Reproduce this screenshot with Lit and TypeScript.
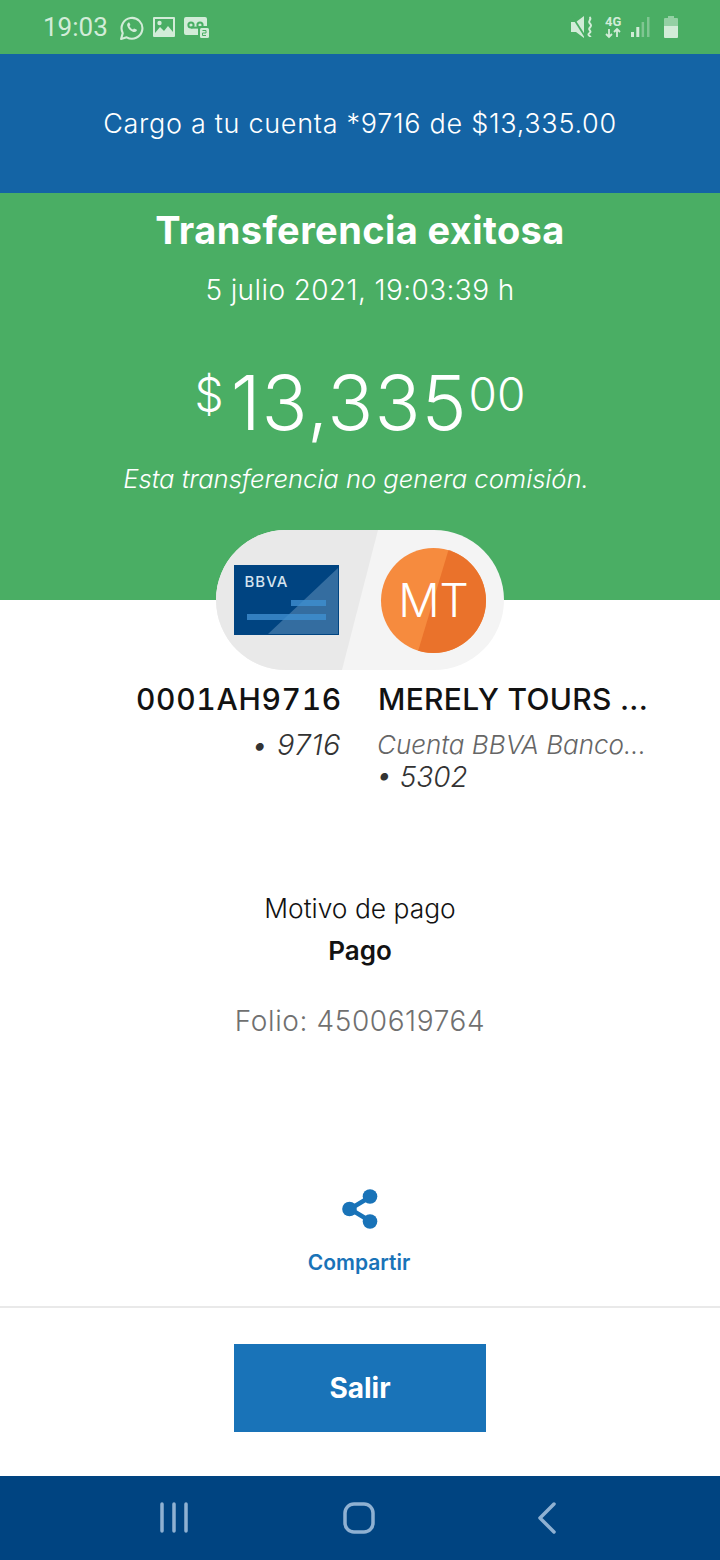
import { LitElement, html, css, svg } from "lit";
import { customElement } from "lit/decorators.js";

const whatsapp = svg`<path d="M2 23l1.6-5.6A10 10 0 1 1 7.4 21.4Z" fill="none" stroke="currentColor" stroke-width="2" stroke-linejoin="round"/><path d="M8.8 7.4c-.9.7-1.2 1.9-.8 3.1.8 2.6 3.1 4.9 5.8 5.7 1.2.3 2.4 0 3.1-.9.4-.6.3-1-.1-1.3l-1.8-.9c-.4-.2-.7-.1-.9.2l-.6.7c-1.7-.6-2.9-1.9-3.5-3.4l.6-.6c.3-.3.3-.6.2-.9l-.8-1.7c-.3-.4-.8-.3-1.2 0Z" fill="currentColor"/>`;

@customElement("app-root")
export class AppRoot extends LitElement {
  static styles = css`
    :host {
      display: block;
      width: 720px;
      height: 1560px;
      background: #fff;
      font-family: Inter, "Liberation Sans", sans-serif;
      color: #121212;
      overflow: hidden;
    }
    .page { display: flex; flex-direction: column; height: 1560px; }

    .status {
      height: 54px; flex: none; background: #4aae64; color: #d2ecd8;
      display: flex; align-items: center; padding: 0 42px 0 43px;
      font-family: Roboto, sans-serif;
    }
    .time { font-size: 26px; margin-right: 11px; width: 65px; }
    .status svg { display: block; flex: none; }
    .left-icons { display: flex; align-items: center; gap: 9px; }
    .right-icons { margin-left: auto; display: flex; align-items: center; }

    .banner {
      height: 139px; flex: none; background: #1464a5; color: #fff;
      display: flex; align-items: center; justify-content: center;
      font-size: 27px; letter-spacing: 0.7px; font-weight: 300;
    }

    .hero {
      height: 407px; flex: none; background: #4aae64; color: #fff;
      display: flex; flex-direction: column; align-items: center;
      box-sizing: border-box; padding-top: 13px;
    }
    .hero h1 { margin: 0; font-size: 38px; letter-spacing: 0.4px; line-height: 48px; font-weight: 700; }
    .date { margin-top: 18px; font-size: 28px; letter-spacing: 0.4px; line-height: 36px; font-weight: 300; }
    .amount {
      margin-top: 52px; display: flex; align-items: flex-start; font-weight: 300;
      height: 84px; line-height: 84px; font-size: 76px; letter-spacing: 1px;
    }
    .amount .cur { font-size: 46px; line-height: 68px; margin-right: 7px; letter-spacing: 0; }
    .amount .cents { font-size: 46px; line-height: 68px; margin-left: 1px; letter-spacing: 0; }
    .note { margin: 17px 8px 0 0; font-size: 25.6px; line-height: 36px; font-style: italic; font-weight: 300; }

    .pill {
      position: relative; z-index: 1; flex: none;
      width: 288px; height: 140px; margin: -70px auto 0;
      border-radius: 70px; overflow: hidden; background: #f4f4f4;
    }
    .pill svg { display: block; }
    .mt {
      position: absolute; left: 165px; top: 17px; width: 105px; height: 105px;
      display: flex; align-items: center; justify-content: center;
      color: #fff; font-size: 46px; font-weight: 300;
    }

    .accounts {
      flex: none; display: grid; grid-template-columns: 341px 1fr; column-gap: 37px;
      margin-top: 11px;
    }
    .from { text-align: right; }
    .name { font-size: 30px; letter-spacing: 0.3px; line-height: 36px; font-weight: 500; white-space: nowrap; }
    .from .name { font-variant-numeric: tabular-nums; letter-spacing: 0.7px; margin-right: -1px; }
    .sub {
      margin-top: 11px; font-size: 29px; letter-spacing: 0.5px; line-height: 33px; font-style: italic;
      font-weight: 300; color: #333; white-space: nowrap;
    }
    .to .sub { font-size: 26px; letter-spacing: 0; color: #666; margin-left: -1px; }
    .to .num { margin-left: -2px; font-size: 28px; line-height: 33px; font-style: italic; font-weight: 300; color: #333; }

    .details { flex: none; margin-top: 96px; text-align: center; }
    .motive { font-size: 26.4px; line-height: 36px; font-weight: 300; }
    .pago { margin-top: 7px; font-size: 26px; line-height: 36px; font-weight: 600; }
    .folio { margin-top: 34px; font-size: 28px; letter-spacing: 0.6px; line-height: 36px; font-weight: 300; color: #707070; }

    .share {
      flex: none; margin-top: 150px; display: flex; flex-direction: column; align-items: center;
      color: #1973b8;
    }
    .share span { margin-top: 20px; margin-right: 2px; font-size: 21px; line-height: 28px; font-weight: 600; }

    .footer {
      flex: 1; margin-top: 29px; border-top: 2px solid #e9e9e9;
      display: flex; justify-content: center; padding-top: 36px;
    }
    .salir {
      width: 252px; height: 88px; border: 0; background: #1973b8; color: #fff;
      font: 700 28px Inter, sans-serif; padding: 0;
    }

    .nav {
      height: 84px; flex: none; background: #004481; color: #8fb1d2;
      display: flex; align-items: center; justify-content: center;
    }
  `;

  render() {
    return html`<div class="page">
      <div class="status">
        <span class="time">19:03</span>
        <div class="left-icons">
          <svg width="25" height="25" viewBox="0 0 24 24">${whatsapp}</svg>
          <svg width="22" height="20" viewBox="0 0 22 20">
            <path fill="currentColor" fill-rule="evenodd" d="M1 0h20a1 1 0 0 1 1 1v18a1 1 0 0 1-1 1H1a1 1 0 0 1-1-1V1a1 1 0 0 1 1-1Zm1 2v14l5-6 4 4 4-5 5 6V2Z"/>
            <circle cx="6.5" cy="6" r="2.2" fill="currentColor"/>
          </svg>
          <svg width="26" height="21" viewBox="0 0 26 21">
            <path fill="currentColor" d="M2 0h19a2 2 0 0 1 2 2v7h-7a2 2 0 0 0-2 2v7H2a2 2 0 0 1-2-2V2a2 2 0 0 1 2-2Z"/>
            <g fill="none" stroke="#4aae64" stroke-width="2">
              <circle cx="7" cy="8" r="2.6"/><circle cx="16" cy="8" r="2.6"/><path d="M7 10.6h9"/>
            </g>
            <rect x="16" y="11" width="9" height="10" rx="1.5" fill="currentColor"/>
            <path d="M18.5 13.5h3.5v2.5h-3.5v2.5H22" fill="none" stroke="#4aae64" stroke-width="1"/>
          </svg>
        </div>
        <div class="right-icons">
          <svg width="23" height="24" viewBox="0 0 23 24">
            <path fill="currentColor" d="M0 7h5l8-6v22l-8-6H0Z"/>
            <path d="M1 1l14 22" stroke="#4aae64" stroke-width="1.8"/>
            <path d="M18.5 2c3 2-2 4 0 6s2 3 0 5 3 3 0 5 1 3 1 4" fill="none" stroke="currentColor" stroke-width="2"/>
          </svg>
          <svg width="17" height="24" viewBox="0 0 17 24" style="margin-left:11px">
            <text x="0" y="10.5" font-family="Roboto, sans-serif" font-size="13" font-weight="700" fill="currentColor">4G</text>
            <path d="M4 14v8M1 19l3 3 3-3M12 22v-8M9 17l3-3 3 3" fill="none" stroke="currentColor" stroke-width="1.8"/>
          </svg>
          <svg width="19" height="20" viewBox="0 0 19 20" style="margin-left:9px">
            <rect x="0" y="15" width="3" height="5" fill="currentColor"/>
            <rect x="5.3" y="10" width="3" height="10" fill="currentColor"/>
            <rect x="10.6" y="5" width="2.5" height="15" fill="currentColor" opacity=".4"/>
            <rect x="16" y="0" width="2.5" height="20" fill="currentColor" opacity=".4"/>
          </svg>
          <svg width="14" height="22" viewBox="0 0 14 22" style="margin-left:14px">
            <path fill="currentColor" opacity=".55" d="M4 0h6v2h3a1 1 0 0 1 1 1v7H0V3a1 1 0 0 1 1-1h3Z"/>
            <path fill="currentColor" d="M0 10h14v11a1 1 0 0 1-1 1H1a1 1 0 0 1-1-1Z"/>
          </svg>
        </div>
      </div>

      <div class="banner">Cargo a tu cuenta *9716 de $13,335.00</div>

      <div class="hero">
        <h1>Transferencia exitosa</h1>
        <div class="date">5 julio 2021, 19:03:39 h</div>
        <div class="amount"><span class="cur">$</span>13,335<span class="cents">00</span></div>
        <div class="note">Esta transferencia no genera comisión.</div>
      </div>

      <div class="pill">
        <svg width="288" height="140" viewBox="0 0 288 140">
          <defs><clipPath id="mtc"><circle cx="217.5" cy="70.5" r="52.5"/></clipPath></defs>
          <path d="M0 0H162L126 140H0Z" fill="#e9e9e9"/>
          <rect x="18" y="35" width="105" height="70" fill="#004481"/>
          <path d="M122 38V104H52Z" fill="#5f8fb9" opacity=".55"/>
          <rect x="75" y="70" width="35" height="6" fill="#3f8fd0" opacity=".8"/>
          <rect x="31" y="84" width="79" height="6" fill="#3f8fd0" opacity=".8"/>
          <text x="28.5" y="57" font-family="Inter, sans-serif" font-size="15" font-weight="500" letter-spacing="1" fill="#d6e4f0">BBVA</text>
          <circle cx="217.5" cy="70.5" r="52.5" fill="#f68b3e"/>
          <path d="M234 15L200 128H280V15Z" fill="#ea722b" clip-path="url(#mtc)"/>
        </svg>
        <div class="mt">MT</div>
      </div>

      <div class="accounts">
        <div class="from">
          <div class="name">0001AH9716</div>
          <div class="sub">• 9716</div>
        </div>
        <div class="to">
          <div class="name">MERELY TOURS ...</div>
          <div class="sub">Cuenta BBVA Banco...</div>
          <div class="num">• 5302</div>
        </div>
      </div>

      <div class="details">
        <div class="motive">Motivo de pago</div>
        <div class="pago">Pago</div>
        <div class="folio">Folio: 4500619764</div>
      </div>

      <div class="share">
        <svg width="36" height="40" viewBox="0 0 36 40">
          <path d="M28 8L8 20L28 32" fill="none" stroke="currentColor" stroke-width="4.5"/>
          <circle cx="28" cy="7.5" r="7.3" fill="currentColor"/>
          <circle cx="7.5" cy="20" r="7.3" fill="currentColor"/>
          <circle cx="28" cy="32.5" r="7.3" fill="currentColor"/>
        </svg>
        <span>Compartir</span>
      </div>

      <div class="footer"><button class="salir">Salir</button></div>

      <div class="nav">
        <svg width="400" height="40" viewBox="0 0 400 40" fill="none" stroke="currentColor" stroke-width="3.5" stroke-linecap="round" stroke-linejoin="round">
          <path d="M2 6v27M14 6v27M26 6v27"/>
          <rect x="185" y="6" width="28" height="28" rx="9"/>
          <path d="M394 6L380 20L394 34"/>
        </svg>
      </div>
    </div>`;
  }
}
